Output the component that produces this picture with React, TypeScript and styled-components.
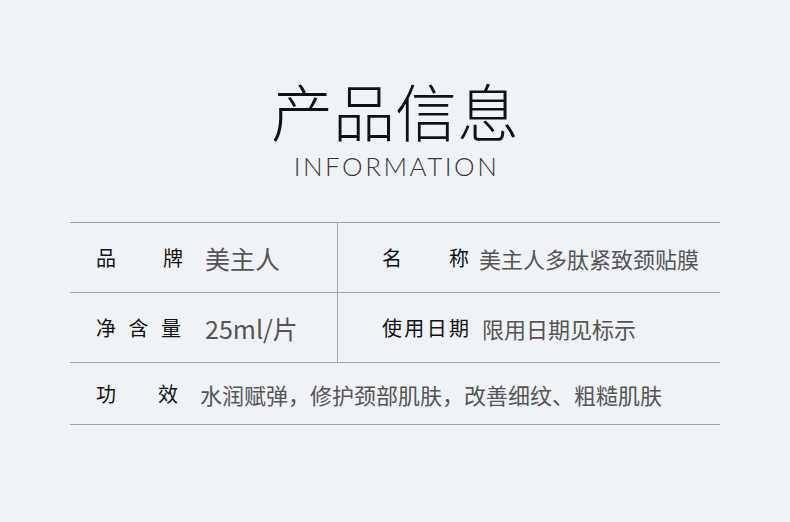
import React from "react";
import styled, { createGlobalStyle } from "styled-components";

const GlobalStyle = createGlobalStyle`
  html, body {
    margin: 0;
    padding: 0;
    background: #eff2f7;
  }
  body {
    font-family: "Noto Sans CJK SC", "Noto Sans", sans-serif;
  }
`;

const Page = styled.div`
  width: 790px;
  height: 522px;
  background: #eff2f7;
  display: flex;
  flex-direction: column;
  align-items: center;
  overflow: hidden;
`;

const Title = styled.h1`
  margin: 74px 0 0;
  font-size: 62px;
  line-height: 72px;
  font-weight: 300;
  color: #111;
`;

const SubTitle = styled.div`
  margin-top: 5px;
  font-family: Lato, "Open Sans", sans-serif;
  font-size: 26px;
  line-height: 30px;
  font-weight: 300;
  letter-spacing: 2.5px;
  color: #3a3a3a;
  padding-left: 3px;
`;

const Table = styled.div`
  margin-top: 41px;
  width: 650px;
  display: grid;
  grid-template-columns: 268px 382px;
  border-top: 1px solid #a0a3a8;
`;

const Cell = styled.div<{ $left?: boolean; $full?: boolean; $h?: number }>`
  display: flex;
  align-items: center;
  height: ${({ $h }) => $h ?? 69}px;
  border-bottom: 1px solid #a0a3a8;
  border-right: ${({ $left }) => ($left ? "1px solid #a0a3a8" : "none")};
  padding-left: ${({ $left, $full }) => ($left || $full ? 26 : 44)}px;
  grid-column: ${({ $full }) => ($full ? "1 / span 2" : "auto")};
`;

const Label = styled.span<{ $w?: number }>`
  width: ${({ $w }) => $w ?? 87}px;
  font-size: 20px;
  font-weight: 400;
  color: #111;
  text-align: justify;
  text-align-last: justify;
  white-space: nowrap;
`;

const Value = styled.span<{ $big?: boolean; $gap?: number }>`
  margin-left: ${({ $gap }) => $gap ?? 22}px;
  font-size: ${({ $big }) => ($big ? 25 : 22)}px;
  color: #555;
  white-space: nowrap;
`;

export default function App() {
  return (
    <Page>
      <GlobalStyle />
      <Title>产品信息</Title>
      <SubTitle>INFORMATION</SubTitle>
      <Table>
        <Cell $left>
          <Label>品牌</Label>
          <Value $big>美主人</Value>
        </Cell>
        <Cell>
          <Label>名称</Label>
          <Value $gap={10}>美主人多肽紧致颈贴膜</Value>
        </Cell>
        <Cell $left>
          <Label $w={85}>净含量</Label>
          <Value $big $gap={24}>25ml/片</Value>
        </Cell>
        <Cell>
          <Label>使用日期</Label>
          <Value $gap={13}>限用日期见标示</Value>
        </Cell>
        <Cell $full $h={61}>
          <Label $w={82}>功效</Label>
          <Value $gap={22}>水润赋弹，修护颈部肌肤，改善细纹、粗糙肌肤</Value>
        </Cell>
      </Table>
    </Page>
  );
}
